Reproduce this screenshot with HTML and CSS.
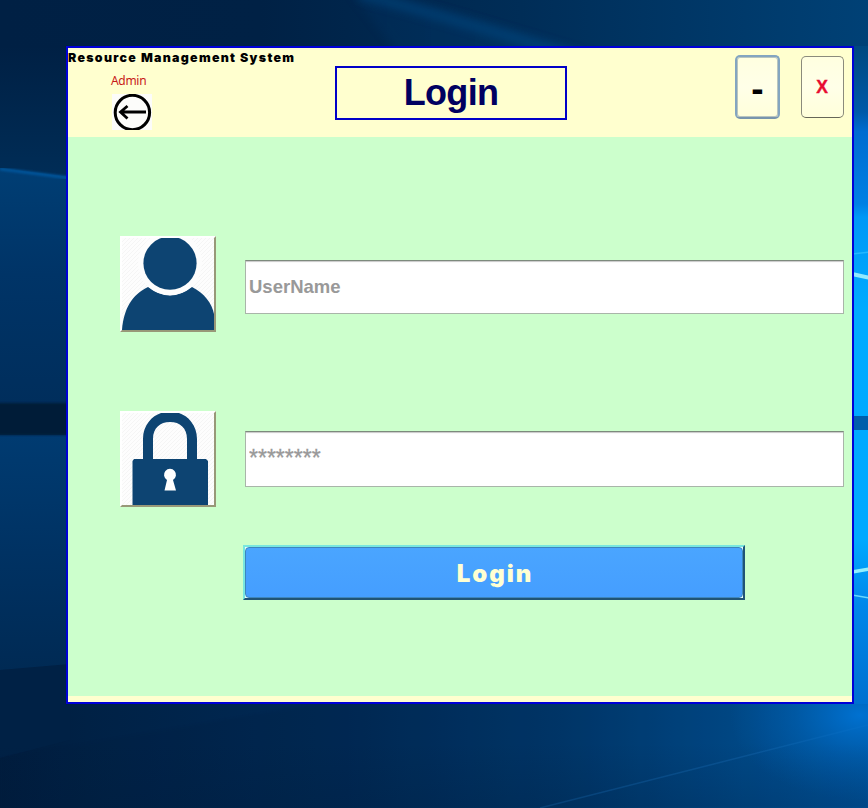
FILE: index.html
```html
<!DOCTYPE html>
<html lang="en">
<head>
<meta charset="utf-8">
<title>Resource Management System - Login</title>
<link rel="stylesheet" href="styles.css">
</head>
<body>
<svg class="wallpaper" viewBox="0 0 868 808" preserveAspectRatio="none" aria-hidden="true">
  <defs>
    <linearGradient id="top"><stop offset="0" stop-color="#002044"/><stop offset=".3" stop-color="#002145"/><stop offset=".6" stop-color="#002d57"/><stop offset="1" stop-color="#004176"/></linearGradient>
    <linearGradient id="beam"><stop offset="0" stop-color="#00315f"/><stop offset="1" stop-color="#004278"/></linearGradient>
    <linearGradient id="upper" x2="0" y2="1"><stop offset="0" stop-color="#002044"/><stop offset="1" stop-color="#002d57"/></linearGradient>
    <linearGradient id="left" x2="0" y2="1"><stop offset="0" stop-color="#003e74"/><stop offset=".45" stop-color="#003467"/><stop offset="1" stop-color="#002e5c"/></linearGradient>
    <linearGradient id="left2" x2="0" y2="1"><stop offset="0" stop-color="#003b71"/><stop offset=".5" stop-color="#003263"/><stop offset="1" stop-color="#002a54"/></linearGradient>
    <linearGradient id="bottom"><stop offset="0" stop-color="#001d3e"/><stop offset=".1" stop-color="#002145"/><stop offset=".4" stop-color="#002a56"/><stop offset=".65" stop-color="#003a6f"/><stop offset=".85" stop-color="#004f91"/><stop offset="1" stop-color="#005cab"/></linearGradient>
    <linearGradient id="right" x2="0" y2="1"><stop offset="0" stop-color="#00487f"/><stop offset=".1" stop-color="#0059a8"/><stop offset=".13" stop-color="#006cd0"/><stop offset=".24" stop-color="#0080e4"/><stop offset=".26" stop-color="#0098f6"/><stop offset=".4" stop-color="#00abff"/><stop offset=".75" stop-color="#00a9ff"/><stop offset=".85" stop-color="#0087ea"/><stop offset="1" stop-color="#0070cf"/></linearGradient>
    <radialGradient id="glow"><stop offset="0" stop-color="#0077db" stop-opacity=".85"/><stop offset=".5" stop-color="#006bc4" stop-opacity=".4"/><stop offset="1" stop-color="#0064b8" stop-opacity="0"/></radialGradient>
    <linearGradient id="shade" x2="0" y2="1"><stop offset=".4" stop-color="#001a38" stop-opacity="0"/><stop offset="1" stop-color="#001a38" stop-opacity=".2"/></linearGradient>
    <filter id="soft" x="-20%" y="-20%" width="140%" height="140%"><feGaussianBlur stdDeviation="4"/></filter>
    <filter id="fine"><feGaussianBlur stdDeviation=".8"/></filter>
  </defs>
  <rect width="868" height="808" fill="#002850"/>
  <rect width="868" height="60" fill="url(#top)"/>
  <path d="M350-8L380-8L600 56L400 56Z" fill="url(#beam)" opacity=".35" filter="url(#soft)"/>
  <path d="M360-6Q460 20 580 58" fill="none" stroke="#004780" stroke-width="11" opacity=".55" filter="url(#soft)"/>
  <path d="M0 46H70V180L0 169Z" fill="url(#upper)"/>
  <path d="M0 168L70 177V404H0Z" fill="url(#left)"/>
  <path d="M0 169L70 178" stroke="#00549a" stroke-width="3" filter="url(#fine)"/>
  <path d="M0 435H70V665L0 670Z" fill="url(#left2)"/>
  <rect x="-4" y="403" width="80" height="32" fill="#001c39" filter="url(#fine)"/>
  <rect y="700" width="868" height="108" fill="url(#bottom)"/>
  <path d="M0 670L70 664V740L0 758Z" fill="#002145"/>
  <path d="M0 758L340 700H868V808H0Z" fill="#001c3e" opacity=".15" filter="url(#fine)"/>
  <path d="M540 808L868 725" stroke="#1566ac" stroke-width="1.5" opacity=".45"/>
  <ellipse cx="860" cy="715" rx="130" ry="85" fill="url(#glow)"/>
  <rect y="700" width="868" height="108" fill="url(#shade)"/>
  <rect x="852" y="46" width="16" height="658" fill="url(#right)"/>
  <path d="M852 274L870 278" stroke="#91eaff" stroke-width="4"/>
  <path d="M852 254L870 252" stroke="#24b8ff" stroke-width="1.5"/>
  <rect x="852" y="416" width="16" height="14" fill="#005eab"/>
  <path d="M852 572L870 569" stroke="#91f0ff" stroke-width="3.5"/>
  <path d="M852 595L870 598" stroke="#66d8ff" stroke-width="1.5"/>
</svg>
<main class="window">
  <header class="header">
    <div class="brand">
      <div class="app-name">Resource Management System</div>
      <div class="role">Admin</div>
      <svg class="back" viewBox="0 0 40 36"><rect width="40" height="36" fill="#fcfcfa"/><ellipse cx="20.4" cy="18.5" rx="17.2" ry="17.2" fill="none" stroke="#000" stroke-width="3"/><path d="M8.5 18H34M15.5 12L8.5 18L15.5 24.5" fill="none" stroke="#000" stroke-width="2.8"/></svg>
    </div>
    <h1 class="title">Login</h1>
    <div class="controls">
      <button class="control minimize"><span>-</span></button>
      <button class="control close"><span>X</span></button>
    </div>
  </header>
  <form class="form">
    <div class="row">
      <svg class="tile" viewBox="0 0 92 92"><defs><pattern id="hatch" width="4" height="4" patternUnits="userSpaceOnUse"><rect width="4" height="4" fill="#fdfdfd"/><path d="M-1 1L1-1M0 4L4 0M3 5L5 3" stroke="#f2f2f2" stroke-width=".8"/></pattern></defs><rect width="92" height="92" fill="url(#hatch)"/><path d="M0 92C2 70 10 57 26 49Q48 66 70 49C82 55 90 65 92 76V92Z" fill="#0d4472"/><circle cx="48" cy="25.2" r="32" fill="#fdfdfd"/><ellipse cx="48" cy="25.2" rx="26.6" ry="26.6" fill="#0d4472"/></svg>
      <input class="field user" type="text" placeholder="UserName">
    </div>
    <div class="row">
      <svg class="tile" viewBox="0 0 92 92"><rect width="92" height="92" fill="url(#hatch)"/><path d="M21 48V26C21 12 30 3 39 0H57C66 3 75 12 75 26V48H65V26C65 15 58 9 48 9S31 15 31 26V48Z" fill="#0d4472"/><path d="M12 46H84L86 48V92H10.5V48Z" fill="#0d4472"/><path d="M45 67L42.5 77.5H54L51 67A6 6 0 1 0 45 67Z" fill="#fff"/></svg>
      <input class="field pass" type="text" placeholder="********">
    </div>
    <button class="submit" type="button"><span>Login</span></button>
  </form>
</main>
</body>
</html>
```
FILE: styles.css
```css
* { box-sizing: border-box; }
body { margin: 0; width: 868px; height: 808px; overflow: hidden; font-family: "Liberation Sans", sans-serif; }
button, input { font-family: inherit; margin: 0; padding: 0; }
.wallpaper { position: absolute; inset: 0; width: 868px; height: 808px; z-index: -1; }
.window { width: 788px; height: 658px; margin: 46px 0 0 66px; border: 2px solid #0000d8; background: #ffffcf; display: flex; flex-direction: column; float: left; }
.header { height: 89px; display: flex; align-items: flex-start; }
.brand { width: 267px; display: flex; flex-direction: column; }
.app-name { height: 20px; line-height: 20px; font-size: 12.4px; font-weight: 900; font-family: Inter, "Liberation Sans", sans-serif; letter-spacing: 1.3px; white-space: nowrap; color: #000; }
.role { height: 26px; margin-left: 43px; font: 12px/26px "Noto Sans", sans-serif; letter-spacing: -.3px; color: #c81818; }
.back { width: 40px; height: 36px; margin-left: 44px; }
.title { margin: 18px 0 0; width: 232px; height: 54px; border: 2px solid #0000c8; font-size: 36px; letter-spacing: -.7px; line-height: 50px; font-weight: bold; text-align: center; color: #000060; }
.controls { display: flex; margin: 7px 0 0 168px; gap: 21px; align-items: flex-start; }
.control { display: flex; align-items: center; justify-content: center; border-radius: 5px; background: linear-gradient(#ffffe0, #ffffe8 50%, #ffffda); }
.minimize { width: 45px; height: 64px; border: 2px solid #83a5c0; border-bottom-color: #7895ad; box-shadow: inset 0 0 0 1px #b8c5bf; font-size: 37px; font-weight: bold; color: #000; }
.minimize span { padding-top: 3px; }
.close { width: 43px; height: 62px; margin-top: 1px; border: 1px solid #8b8b7c; border-bottom-color: #666658; font-size: 17.5px; font-weight: bold; color: #e80c30; }
.close span { -webkit-text-stroke: .4px #e80c30; padding-right: 1px; }
.form { height: 559px; padding: 99px 8px 0 52px; background: #ccffcc; }
.row { display: flex; height: 96px; margin-bottom: 79px; gap: 29px; }
.tile { width: 96px; height: 96px; border: 2px solid; border-color: #fff #989878 #989878 #fff; background: #fff; }
.field { width: 599px; border: 1px solid #a9b5a9; border-top-color: #7d8a7d; border-radius: 0; background: #fff; box-shadow: inset 0 2px 1px -1px #c8c8c8; padding: 0 3px; outline: 0; }
.field::placeholder { color: #999; opacity: 1; }
.user { height: 54px; margin-top: 24px; font-size: 18.5px; font-weight: bold; }
.pass { height: 56px; margin-top: 20px; padding-bottom: 1px; font-size: 23px; }
.pass::placeholder { -webkit-text-stroke: .3px #999; }
.submit { display: block; width: 502px; height: 55px; margin: -41px 0 0 123px; border: 2px solid; border-color: #78e7df #205475 #205475 #78e7df; background: #e8ffff; color: #ffffd2; font: 900 24px Inter, "Liberation Sans", sans-serif; }
.submit span { display: flex; align-items: center; justify-content: center; height: 51px; padding: 2px 0 0 2px; border-radius: 4px; border: 1px solid #3c85bd; background: linear-gradient(#4aa5ff, #459eff); letter-spacing: 1.9px; }
```
